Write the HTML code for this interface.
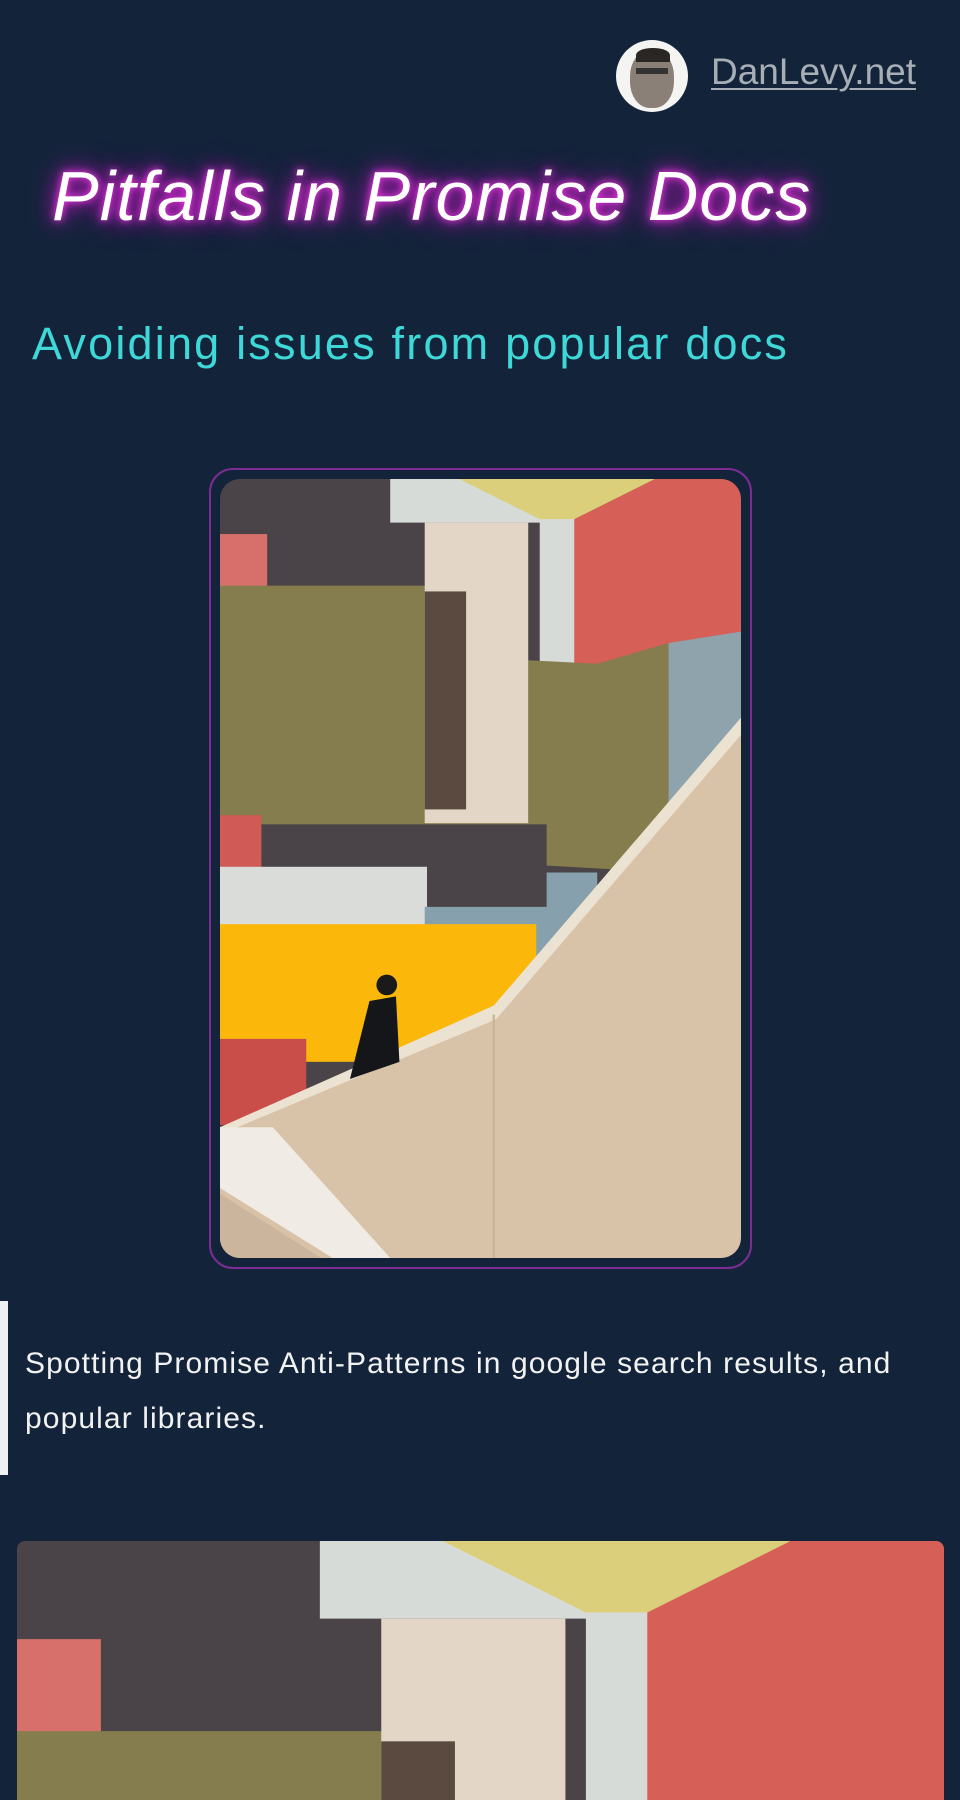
<!DOCTYPE html>
<html><head><meta charset="utf-8"><style>
html,body{margin:0;padding:0;width:960px;height:1800px;overflow:hidden;background:#13243a;font-family:"Liberation Sans",sans-serif;}
.abs{position:absolute}
</style></head><body>
<svg width="0" height="0" style="position:absolute">
<defs>
<g id="photo">
<rect x="192" y="417" width="453" height="679" fill="#4a4448"/>
<polygon points="340,417 505,417 505,590 470,590 470,455 340,455" fill="#d7dbd8"/>
<polygon points="400,417 570,417 520,452 470,452" fill="#dccf7c"/>
<polygon points="500,452 570,417 645,417 645,560 582,590 500,590" fill="#d65f58"/>
<polygon points="582,560 645,550 645,640 582,720" fill="#8fa3ad"/>
<rect x="192" y="465" width="41" height="48" fill="#d7706a"/>
<rect x="192" y="510" width="180" height="240" fill="#857d4e"/>
<polygon points="370,705 460,715 460,575 520,578 582,560 582,760 372,748" fill="#857d4e"/>
<rect x="370" y="455" width="90" height="262" fill="#e4d6c6"/>
<rect x="370" y="515" width="36" height="190" fill="#5a4a40"/>
<rect x="192" y="710" width="36" height="80" fill="#cf5a56"/>
<rect x="228" y="718" width="248" height="72" fill="#4a4448"/>
<rect x="192" y="755" width="180" height="52" fill="#d9dcd8"/>
<polygon points="370,790 476,790 476,760 520,760 520,835 370,835" fill="#86a0ad"/>
<rect x="192" y="805" width="275" height="120" fill="#fbb80b"/>
<rect x="192" y="905" width="75" height="75" fill="#c94d48"/>
<polygon points="645,630 645,1096 192,1096 192,982 430,880" fill="#d8c2a8"/>
<polygon points="645,625 645,640 432,888 200,985 192,982 430,876" fill="#ece2d2"/>
<line x1="430" y1="884" x2="430" y2="1096" stroke="#c9b399" stroke-width="2"/>
<polygon points="192,982 238,982 340,1096 290,1096 192,1035" fill="#f0ebe4"/>
<polygon points="192,1040 280,1096 192,1096" fill="#cbb59c"/>
<circle cx="337" cy="858" r="9" fill="#1a1a1a"/>
<polygon points="322,872 345,868 348,925 305,940" fill="#15161a"/>
</g>
<clipPath id="c1"><rect x="0" y="0" width="521" height="779" rx="20"/></clipPath>
</defs></svg>

<div class="abs" style="left:616px;top:40px;width:72px;height:72px;border-radius:50%;background:#f4f4f2;overflow:hidden">
<div style="position:absolute;left:14px;top:10px;width:44px;height:58px;border-radius:45%;background:#8a8078"></div>
<div style="position:absolute;left:20px;top:8px;width:34px;height:14px;border-radius:50% 50% 0 0;background:#2a2624"></div>
<div style="position:absolute;left:20px;top:28px;width:32px;height:6px;background:#333"></div>
</div>
<div class="abs" style="left:711px;top:51px;font-size:37px;color:#a8aeb6;text-decoration:underline;text-decoration-thickness:2px;text-underline-offset:4px">DanLevy.net</div>

<div class="abs" style="left:52px;top:156px;font-size:70px;font-style:italic;color:#fff;letter-spacing:1px;text-shadow:0 0 8px #ff3df0,0 0 18px #d41bd0,0 0 32px #a010a8;white-space:nowrap">Pitfalls in Promise Docs</div>

<div class="abs" style="left:32px;top:318px;font-size:45px;letter-spacing:2.2px;color:#3fd8d8;white-space:nowrap">Avoiding issues from popular docs</div>

<div class="abs" style="left:209px;top:468px;width:539px;height:797px;border:2px solid #7c2c93;border-radius:24px"></div>
<svg class="abs" style="left:220px;top:479px" width="521" height="779" viewBox="0 0 521 779">
<g clip-path="url(#c1)"><svg width="521" height="779" viewBox="192 417 453 679" preserveAspectRatio="none"><use href="#photo"/></svg></g>
</svg>

<div class="abs" style="left:0;top:1301px;width:8px;height:174px;background:#eef0f4"></div>
<div class="abs" style="left:25px;top:1336px;width:905px;font-size:30px;letter-spacing:1.1px;line-height:55px;color:#f2f2f2">Spotting Promise Anti-Patterns in google search results, and popular libraries.</div>

<div class="abs" style="left:17px;top:1541px;width:927px;height:259px;overflow:hidden;border-radius:8px 8px 0 0">
<svg width="927" height="1388" viewBox="192 417 453 679" preserveAspectRatio="none"><use href="#photo"/></svg>
</div>
</body></html>
